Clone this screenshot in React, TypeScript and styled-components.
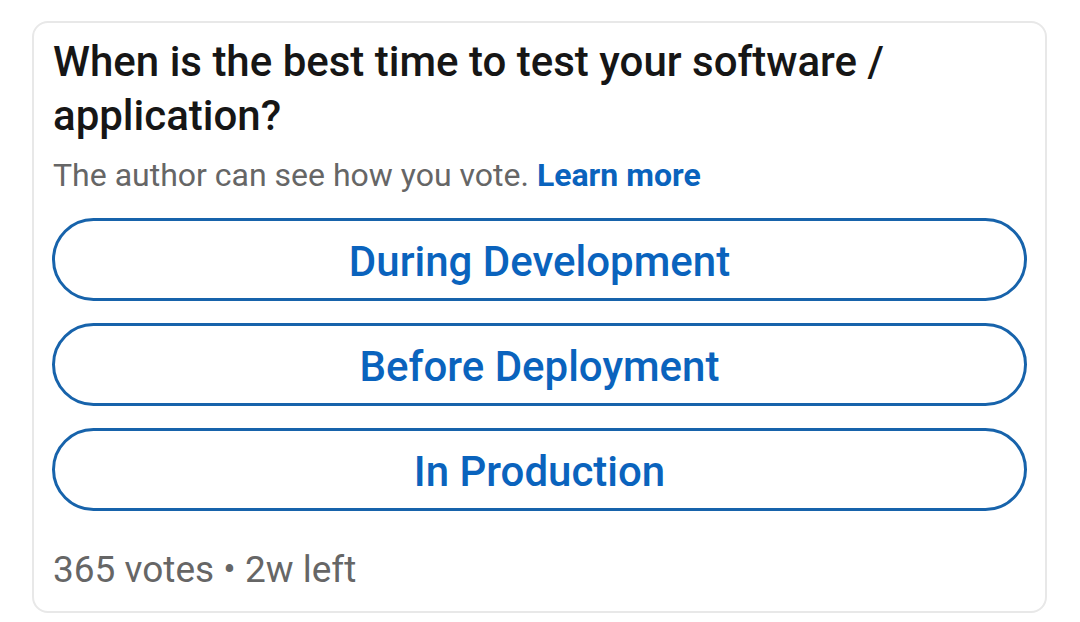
import React from "react";
import styled, { createGlobalStyle } from "styled-components";

const Global = createGlobalStyle`
  html, body { margin: 0; padding: 0; background: #ffffff; }
  body { font-family: Roboto, "Noto Sans", "Liberation Sans", sans-serif; }
  * { box-sizing: border-box; }
`;

const Card = styled.section`
  margin: 21px 33px 0 32px;
  height: 592px;
  border: 2px solid #e8e8e8;
  border-radius: 16px;
  padding: 12px 18px 0 18px;
  display: flex;
  flex-direction: column;
  background: #fff;
`;

const Title = styled.h2`
  margin: 0 0 0 1px;
  font-size: 42px;
  line-height: 54px;
  font-weight: 500;
  color: #161616;
  letter-spacing: 0;
`;

const Note = styled.p`
  margin: 12px 0 0 1px;
  font-size: 32px;
  line-height: 40px;
  color: #666666;
`;

const Learn = styled.a`
  color: #0a63bd;
  font-weight: 700;
  text-decoration: none;
`;

const Options = styled.div`
  margin-top: 23px;
  display: flex;
  flex-direction: column;
  gap: 22px;
`;

const Option = styled.button`
  height: 83px;
  width: 100%;
  border: 3px solid #1763ab;
  border-radius: 42px;
  background: #fff;
  color: #0a63bd;
  font-family: Roboto, "Noto Sans", "Liberation Sans", sans-serif;
  font-size: 42px;
  font-weight: 500;
  display: flex;
  align-items: center;
  justify-content: center;
  padding: 3px 0 0 0;
`;

const Footer = styled.div`
  margin: 37px 0 0 1px;
  font-size: 37px;
  line-height: 44px;
  color: #666666;
`;

const options = ["During Development", "Before Deployment", "In Production"];

export default function App() {
  return (
    <>
      <Global />
      <Card>
        <Title>When is the best time to test your software / application?</Title>
        <Note>
          The author can see how you vote. <Learn href="#">Learn more</Learn>
        </Note>
        <Options>
          {options.map((o) => (
            <Option key={o}>{o}</Option>
          ))}
        </Options>
        <Footer>365 votes • 2w left</Footer>
      </Card>
    </>
  );
}
